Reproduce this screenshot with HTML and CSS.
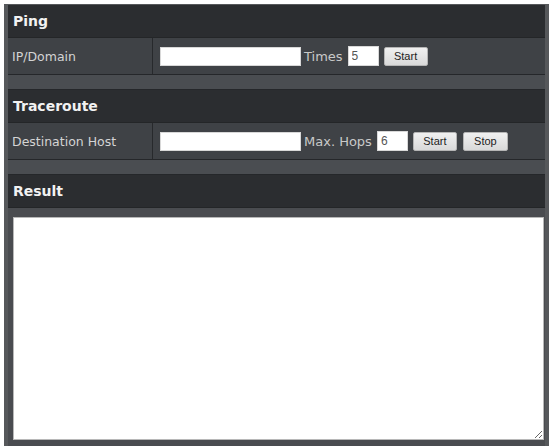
FILE: index.html
```html
<!DOCTYPE html>
<html>
<head>
<meta charset="utf-8">
<link rel="stylesheet" href="styles.css">
</head>
<body>
<div class="panel">
  <div class="hdr">Ping</div>
  <div class="row">
    <div class="label">IP/Domain</div>
    <div class="field">
      <input class="txt wide" type="text">
      <span class="word">Times</span>
      <input class="txt num" type="text" value="5">
      <button class="btn">Start</button>
    </div>
  </div>
  <div class="band"></div>
  <div class="hdr">Traceroute</div>
  <div class="row">
    <div class="label">Destination Host</div>
    <div class="field">
      <input class="txt wide" type="text">
      <span class="word">Max. Hops</span>
      <input class="txt num" type="text" value="6">
      <button class="btn">Start</button>
      <button class="btn stop">Stop</button>
    </div>
  </div>
  <div class="band"></div>
  <div class="hdr">Result</div>
  <div class="result">
    <textarea class="out"></textarea>
  </div>
</div>
</body>
</html>
```
FILE: styles.css
```css
html, body {
  margin: 0;
  padding: 0;
  background: #ffffff;
}
body {
  height: 446px;
  overflow: hidden;
}
.panel {
  margin: 4px 2px 0 4px;
  height: 442px;
  box-sizing: border-box;
  background: #56585b;
  padding: 1px 4px 0 4px;
  display: flex;
  flex-direction: column;
  font-family: "DejaVu Sans", Verdana, sans-serif;
}
.hdr {
  height: 33px;
  box-sizing: border-box;
  background: #2b2d30;
  border-bottom: 1px solid #242628;
  color: #f2f2f2;
  font-weight: bold;
  font-size: 14px;
  display: flex;
  align-items: center;
  padding-left: 5px;
}
.row {
  height: 37px;
  display: flex;
  background: #3f4246;
  border-bottom: 1px solid #25272a;
  box-sizing: border-box;
}
.label {
  width: 145px;
  box-sizing: border-box;
  border-right: 1px solid #27292c;
  color: #d4d4d4;
  font-size: 12.5px;
  padding-left: 4px;
  display: flex;
  align-items: center;
}
.field {
  flex: 1;
  display: flex;
  align-items: center;
  padding-left: 7px;
}
.txt {
  box-sizing: border-box;
  background: #ffffff;
  border: 1px solid #d8d8d8;
  margin: 0;
  padding: 0 3px;
  font-family: "Liberation Sans", Arial, sans-serif;
  font-size: 12px;
  color: #555;
  outline: none;
}
.wide {
  width: 141px;
  height: 19px;
}
.num {
  width: 31px;
  height: 20px;
  margin-left: 5px;
}
.word {
  color: #c9c9c9;
  font-size: 13px;
  margin-left: 3px;
}
.btn {
  box-sizing: border-box;
  width: 44px;
  height: 19px;
  margin: 0 0 0 5px;
  padding: 0;
  background: linear-gradient(#f0f0f0, #d9d9d9);
  border: 1px solid #b5b5b5;
  border-radius: 2px;
  font-family: "Liberation Sans", Arial, sans-serif;
  font-size: 11px;
  color: #222;
}
.stop {
  width: 45px;
  margin-left: 6px;
}
.band {
  height: 15px;
  box-sizing: border-box;
  background: #4a4d51;
  border-bottom: 1px solid #25272a;
}
.result {
  flex: 1;
  background: #4a4c50;
  padding: 9px 1px 6px 5px;
  display: flex;
}
.out {
  flex: 1;
  margin: 0;
  box-sizing: border-box;
  border: 1px solid #b8b8b8;
  background: #ffffff;
  resize: both;
}
```
